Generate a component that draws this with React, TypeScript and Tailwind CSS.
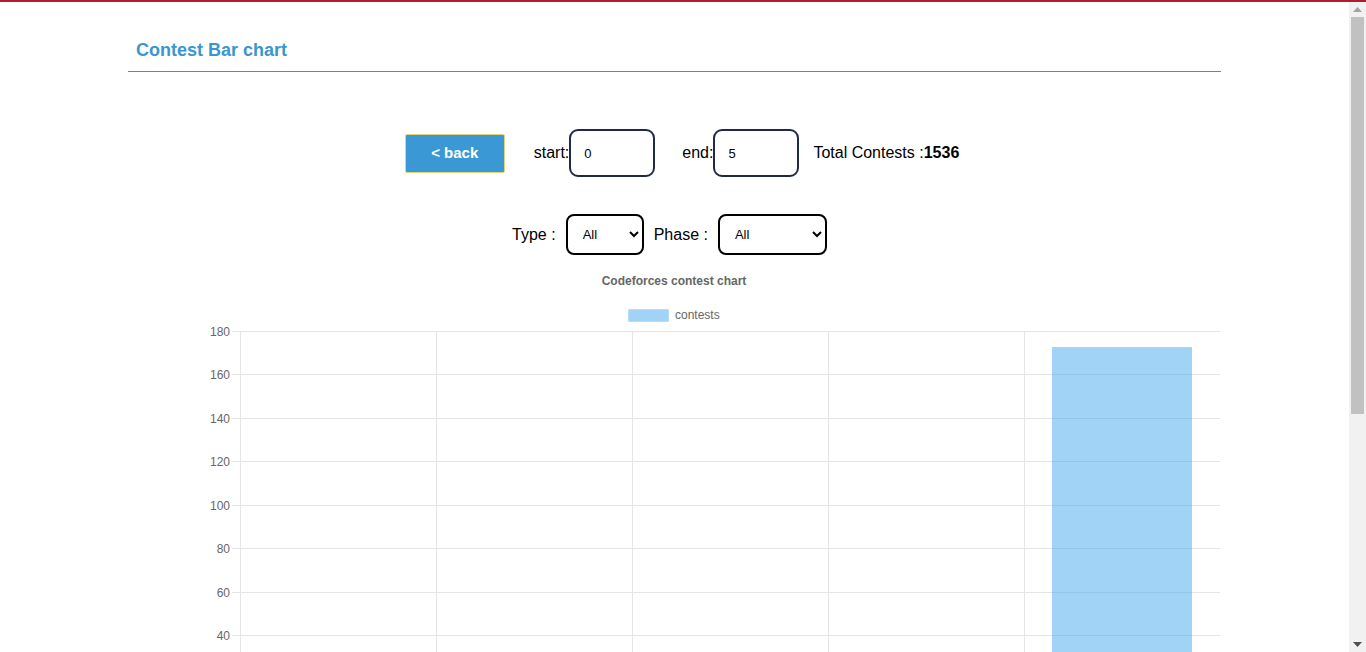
import React from "react";

const ticks = [0, 20, 40, 60, 80, 100, 120, 140, 160, 180];
const top = 76;
const step = 43.43;
const zeroY = top + 9 * step;
const plotL = 112;
const plotR = 1092;
const colW = (plotR - plotL) / 5;

function Chart() {
  const barVal = 172.6;
  const barTop = zeroY - (barVal / 20) * step;
  const labels = ["1", "2", "3", "4", "5"];
  return (
    <svg width={1093} height={758} className="block shrink-0" style={{ fontFamily: '"Liberation Sans", Arial, sans-serif' }}>
      <text x={546} y={30} textAnchor="middle" fontSize={12} fontWeight="bold" fill="#666">
        Codeforces contest chart
      </text>
      <rect x={500.5} y={54.5} width={40} height={12} fill="rgba(54,162,235,0.47)" stroke="rgba(54,162,235,0.15)" />
      <text x={547} y={64} fontSize={12} fill="#666">contests</text>
      {ticks.map((t, i) => {
        const y = Math.round(zeroY - i * step) + 0.5;
        return (
          <g key={t}>
            <line x1={plotL - 8} x2={plotR} y1={y} y2={y} stroke="#e5e5e5" strokeWidth={1} />
            <text x={plotL - 10} y={y + 4} textAnchor="end" fontSize={12} fill="#666">
              {t}
            </text>
          </g>
        );
      })}
      {[0, 1, 2, 3, 4].map((i) => {
        const x = Math.round(plotL + i * colW) + 0.5;
        return <line key={i} x1={x} x2={x} y1={top} y2={zeroY + 8} stroke="#e5e5e5" strokeWidth={1} />;
      })}
      <rect x={924} y={barTop} width={140} height={zeroY - barTop} fill="rgba(54,162,235,0.47)" />
      {labels.map((l, i) => (
        <text key={l} x={plotL + colW * (i + 0.5)} y={zeroY + 22} textAnchor="middle" fontSize={12} fill="#666">
          {l}
        </text>
      ))}
    </svg>
  );
}

function Scrollbar() {
  return (
    <div className="w-[17px] h-full bg-[#f1f1f1] flex flex-col shrink-0">
      <div className="h-[15px] flex items-center justify-center">
        <svg width={9} height={5} viewBox="0 0 9 5">
          <path d="M4.5 0 L9 5 L0 5 Z" fill="#a3a3a3" />
        </svg>
      </div>
      <div className="mx-[2px] h-[397px] bg-[#c1c1c1]" />
      <div className="flex-1" />
      <div className="h-[15px] flex items-center justify-center">
        <svg width={9} height={5} viewBox="0 0 9 5">
          <path d="M0 0 L9 0 L4.5 5 Z" fill="#505050" />
        </svg>
      </div>
    </div>
  );
}

export default function App() {
  return (
    <div className="h-[652px] overflow-hidden border-t-2 border-[#b01c2e] bg-white">
      <div className="h-[650px] flex">
        <div
          className="flex-1 h-full overflow-hidden text-black"
          style={{ fontFamily: '"Liberation Sans", Arial, sans-serif' }}
        >
          <div className="w-[1093px] mx-auto">
            <div className="pt-[35px] pb-[7px] pl-2 border-b border-[#4a90c6]">
              <h1 className="text-[18px] leading-[27px] font-bold text-[#3a96d0]">Contest Bar chart</h1>
            </div>
            <div className="mt-[57px] flex items-center justify-center pl-[15px]">
              <button className="w-[100px] h-[39px] bg-[#3a99d4] border border-[#e2d47c] rounded-[2px] text-white font-bold text-[15px]">
                &lt; back
              </button>
              <span className="ml-[29px] text-[16px]">start:</span>
              <input
                defaultValue="0"
                className="w-[86px] h-[48px] border-2 border-[#1f2a4a] rounded-[9px] px-[13px] text-[13px] outline-none"
              />
              <span className="ml-[27px] text-[16px]">end:</span>
              <input
                defaultValue="5"
                className="w-[86px] h-[48px] border-2 border-[#1f2a4a] rounded-[9px] px-[13px] text-[13px] outline-none"
              />
              <span className="ml-[14px] text-[16px]">
                Total Contests :<b>1536</b>
              </span>
            </div>
            <div className="mt-[37px] flex items-center justify-center pr-[10px]">
              <span className="text-[16px]">Type :</span>
              <select className="ml-[10px] w-[78px] h-[41px] border-2 border-black rounded-[8px] bg-white pl-[11px] pr-1 text-[13px]">
                <option>All</option>
              </select>
              <span className="ml-[10px] text-[16px]">Phase :</span>
              <select className="ml-[10px] w-[109px] h-[41px] border-2 border-black rounded-[8px] bg-white pl-[11px] pr-1 text-[13px]">
                <option>All</option>
              </select>
            </div>
            <Chart />
          </div>
        </div>
        <Scrollbar />
      </div>
    </div>
  );
}
